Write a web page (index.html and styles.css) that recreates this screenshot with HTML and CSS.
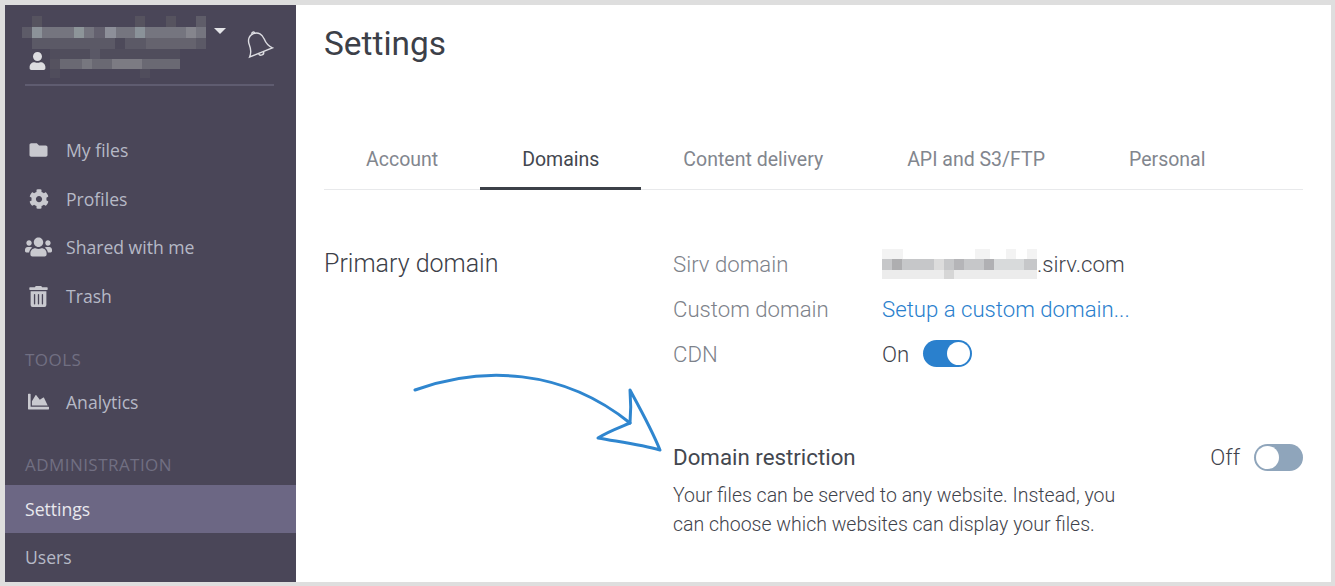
FILE: index.html
```html
<!DOCTYPE html>
<html lang="en">

<head>
    <meta charset="UTF-8">
    <title>Settings</title>
    <link rel="stylesheet" href="styles.css">
</head>

<body>
    <div class="frame">
        <aside class="sidebar">
            <div class="account">
                <div class="account-info">
                    <svg class="blur-name" width="184" height="62" viewBox="0 0 184 62">
                        <g fill="#56535f">
                            <rect x="10" y="0" width="10" height="11" />
                            <rect x="113" y="0" width="10" height="11" />
                            <rect x="144" y="0" width="10" height="11" />
                            <rect x="174" y="0" width="10" height="11" fill="#5f5d69" />
                        </g>
                        <rect x="0" y="11" width="184" height="11" fill="#75757f" />
                        <rect x="0" y="11" width="10" height="11" fill="#5d5b68" />
                        <rect x="10" y="11" width="10" height="11" fill="#8c9299" />
                        <rect x="52" y="11" width="10" height="11" fill="#8d9599" />
                        <rect x="72" y="11" width="11" height="11" fill="#64616f" />
                        <rect x="83" y="11" width="11" height="11" fill="#8d8f99" />
                        <rect x="113" y="11" width="10" height="11" fill="#8a9299" />
                        <rect x="164" y="11" width="10" height="11" fill="#85858d" />
                        <rect x="10" y="22" width="174" height="11" fill="#5b5966" />
                        <rect x="93" y="22" width="10" height="11" fill="#4d4a5a" />
                        <rect x="124" y="22" width="50" height="11" fill="#65636e" />
                        <rect x="28" y="33" width="130" height="10" fill="#504d5c" />
                        <rect x="68" y="33" width="10" height="10" fill="#5a5866" />
                        <rect x="28" y="43" width="130" height="10" fill="#6a6973" />
                        <rect x="28" y="43" width="10" height="10" fill="#55525f" />
                        <rect x="60" y="43" width="10" height="10" fill="#77777f" />
                        <rect x="90" y="43" width="30" height="10" fill="#7c7b83" />
                        <rect x="28" y="53" width="10" height="9" fill="#504d5c" />
                        <rect x="118" y="53" width="10" height="9" fill="#504d5c" />
                    </svg>
                    <svg class="user-icon" width="17" height="18" viewBox="0 0 448 512">
                        <path
                            d="M224 256c70.7 0 128-57.3 128-128S294.7 0 224 0 96 57.3 96 128s57.3 128 128 128zm89.6 32h-16.7c-22.2 10.2-46.9 16-72.9 16s-50.6-5.8-72.9-16h-16.7C60.2 288 0 348.2 0 422.4V464c0 26.5 21.5 48 48 48h352c26.5 0 48-21.5 48-48v-41.6c0-74.2-60.2-134.4-134.4-134.4z" />
                    </svg>
                    <span class="caret"></span>
                </div>
                <svg class="bell" width="32" height="32" viewBox="0 0 30 30">
                    <g transform="rotate(-22 15 15)">
                        <path d="M15 3.5c-5 0-7.5 4-7.5 8.500 0 5.500-1.500 8-4 10.500h23c-2.500-2.500-4-5-4-10.500 0-4.500-2.500-8.500-7.500-8.500z" />
                        <path d="M13.500 3.500a1.500 1.500 0 0 1 3 0" />
                        <path d="M12.500 22.500a2.500 2.500 0 0 0 5 0" />
                    </g>
                </svg>
            </div>

            <nav class="nav">
                <a class="nav-item">
                    <span class="nav-icon"><svg width="21" height="18" viewBox="0 0 512 512">
                            <path
                                d="M464 128H272l-64-64H48C21.490 64 0 85.490 0 112v288c0 26.510 21.490 48 48 48h416c26.510 0 48-21.490 48-48V176c0-26.510-21.490-48-48-48z" />
                        </svg></span>
                    My files
                </a>
                <a class="nav-item">
                    <span class="nav-icon"><svg width="20" height="20" viewBox="0 0 512 512">
                            <path
                                d="M487.400 315.700l-42.600-24.600c4.300-23.200 4.300-47 0-70.200l42.600-24.600c4.900-2.800 7.100-8.600 5.500-14-11.100-35.600-30-67.800-54.700-94.600-3.800-4.100-10-5.100-14.800-2.300L380.800 110c-17.900-15.400-38.500-27.300-60.800-35.100V25.800c0-5.600-3.900-10.500-9.400-11.700-36.700-8.200-74.300-7.800-109.200 0-5.500 1.200-9.400 6.100-9.400 11.700V75c-22.200 7.900-42.800 19.800-60.800 35.100L88.700 85.500c-4.900-2.800-11-1.900-14.800 2.300-24.700 26.700-43.600 58.900-54.700 94.600-1.700 5.400.6 11.200 5.500 14L67.300 221c-4.300 23.200-4.300 47 0 70.200l-42.600 24.600c-4.900 2.800-7.100 8.600-5.500 14 11.100 35.600 30 67.800 54.700 94.600 3.800 4.100 10 5.100 14.800 2.300l42.600-24.600c17.900 15.400 38.500 27.300 60.800 35.100v49.200c0 5.600 3.900 10.500 9.400 11.700 36.700 8.200 74.300 7.800 109.200 0 5.500-1.200 9.400-6.100 9.400-11.700v-49.200c22.200-7.900 42.800-19.800 60.800-35.100l42.600 24.600c4.900 2.800 11 1.900 14.800-2.300 24.700-26.700 43.600-58.900 54.700-94.600 1.500-5.500-.7-11.300-5.600-14.100zM256 336c-44.100 0-80-35.900-80-80s35.900-80 80-80 80 35.900 80 80-35.900 80-80 80z" />
                        </svg></span>
                    Profiles
                </a>
                <a class="nav-item">
                    <span class="nav-icon"><svg width="27" height="22" viewBox="0 0 640 512">
                            <path
                                d="M96 224c35.300 0 64-28.700 64-64s-28.700-64-64-64-64 28.700-64 64 28.700 64 64 64zm448 0c35.300 0 64-28.700 64-64s-28.700-64-64-64-64 28.700-64 64 28.700 64 64 64zm32 32h-64c-17.600 0-33.500 7.100-45.100 18.600 40.300 22.100 68.900 62 75.100 109.400h66c17.700 0 32-14.300 32-32v-32c0-35.300-28.700-64-64-64zm-256 0c61.900 0 112-50.100 112-112S381.900 32 320 32 208 82.100 208 144s50.100 112 112 112zm76.800 32h-8.300c-20.800 10-43.900 16-68.500 16s-47.600-6-68.500-16h-8.300C179.600 288 128 339.600 128 403.200V432c0 26.500 21.500 48 48 48h288c26.500 0 48-21.500 48-48v-28.800c0-63.600-51.600-115.200-115.200-115.200zm-223.700-13.400C161.500 263.100 145.600 256 128 256H64c-35.300 0-64 28.700-64 64v32c0 17.700 14.300 32 32 32h65.900c6.300-47.400 34.900-87.300 75.200-109.400z" />
                        </svg></span>
                    Shared with me
                </a>
                <a class="nav-item">
                    <span class="nav-icon"><svg width="19" height="21" viewBox="0 0 448 512">
                            <path
                                d="M32 464a48 48 0 0 0 48 48h288a48 48 0 0 0 48-48V128H32zm272-256a16 16 0 0 1 32 0v224a16 16 0 0 1-32 0zm-96 0a16 16 0 0 1 32 0v224a16 16 0 0 1-32 0zm-96 0a16 16 0 0 1 32 0v224a16 16 0 0 1-32 0zM432 32H312l-9.400-18.700A24 24 0 0 0 281.100 0H166.800a23.720 23.720 0 0 0-21.400 13.300L136 32H16A16 16 0 0 0 0 48v32a16 16 0 0 0 16 16h416a16 16 0 0 0 16-16V48a16 16 0 0 0-16-16z" />
                        </svg></span>
                    Trash
                </a>

                <div class="nav-label nav-label-tools">TOOLS</div>
                <a class="nav-item">
                    <span class="nav-icon"><svg width="21" height="21" viewBox="0 0 512 512">
                            <path
                                d="M500 384c6.600 0 12 5.400 12 12v40c0 6.600-5.400 12-12 12H12c-6.600 0-12-5.400-12-12V76c0-6.600 5.400-12 12-12h40c6.600 0 12 5.400 12 12v308h436zM372.700 159.500L288 216l-85.300-113.700c-5.100-6.800-15.500-6.300-19.900 1L96 248v104h384l-89.900-187.800c-3.200-6.500-11.400-8.700-17.400-4.700z" />
                        </svg></span>
                    Analytics
                </a>

                <div class="nav-label nav-label-admin">ADMINISTRATION</div>
                <a class="nav-item nav-plain active">Settings</a>
                <a class="nav-item nav-plain">Users</a>
            </nav>
        </aside>

        <main class="main">
            <h1>Settings</h1>

            <div class="tabs">
                <a class="tab">Account</a>
                <a class="tab current">Domains</a>
                <a class="tab">Content delivery</a>
                <a class="tab">API and S3/FTP</a>
                <a class="tab">Personal</a>
            </div>

            <section class="domain-section">
                <h2>Primary domain</h2>
                <div class="domain-rows">
                    <div class="row">
                        <span class="row-label">Sirv domain</span>
                        <span class="row-value">
                            <svg class="blur-domain" width="155" height="30" viewBox="0 0 155 30">
                                <g fill="#f3f3f3">
                                    <rect x="0" y="0" width="21" height="10" />
                                    <rect x="93" y="0" width="15" height="10" />
                                    <rect x="124" y="0" width="10" height="10" />
                                    <rect x="145" y="0" width="10" height="10" />
                                </g>
                                <rect x="0" y="10" width="155" height="11" fill="#c6c7c9" />
                                <rect x="0" y="21" width="155" height="9" fill="#ececec" />
                                <rect x="10" y="10" width="10" height="11" fill="#aeaeb0" />
                                <rect x="52" y="10" width="10" height="11" fill="#dcdcdc" />
                                <rect x="72" y="10" width="10" height="11" fill="#b5b5b8" />
                                <rect x="102" y="10" width="10" height="11" fill="#b0b0b3" />
                                <rect x="112" y="10" width="30" height="11" fill="#d8dadb" />
                                <rect x="62" y="21" width="10" height="9" fill="#d6d6d6" />
                            </svg>.sirv.com
                        </span>
                    </div>
                    <div class="row">
                        <span class="row-label">Custom domain</span>
                        <a class="row-link">Setup a custom domain...</a>
                    </div>
                    <div class="row">
                        <span class="row-label">CDN</span>
                        <span class="row-value toggle-wrap">On <span class="toggle on"></span></span>
                    </div>
                </div>
            </section>

            <section class="restriction">
                <div class="restriction-head">
                    <h3>Domain restriction</h3>
                    <span class="row-value toggle-wrap">Off <span class="toggle off"></span></span>
                </div>
                <p>Your files can be served to any website. Instead, you<br>can choose which websites can display your files.</p>
            </section>

            <svg class="arrow" width="260" height="100" viewBox="0 0 260 100">
                <path d="M3 16C70 -8 150 -6 218 49" />
                <path d="M218 49C219 38 219 28 218 16C230 38 240 56 248 76C230 71 208 68 186 64C195 58 206 54 218 49z" />
            </svg>
        </main>
    </div>
</body>

</html>
```

FILE: styles.css
```css
* {
    box-sizing: border-box;
}

body {
    margin: 0;
    background: #fff;
    overflow: hidden;
}

.frame {
    display: flex;
    height: 586px;
    border: 5px solid #dedede;
    border-right-width: 4px;
    border-bottom-width: 4px;
    background: #fff;
}

/* sidebar */
.sidebar {
    width: 291px;
    flex-shrink: 0;
    background: #4a4658;
    font-family: 'Open Sans', sans-serif;
    overflow: hidden;
}

.account {
    position: relative;
    height: 81px;
    margin: 0 22px 0 20px;
    border-bottom: 2px solid #5f5c70;
}

.account-info {
    height: 79px;
}

.blur-name {
    position: absolute;
    left: -3px;
    top: 11px;
}

.user-icon {
    position: absolute;
    left: 4px;
    top: 47px;
    fill: #dcdce0;
}

.caret {
    position: absolute;
    left: 189px;
    top: 23px;
    border-left: 6px solid transparent;
    border-right: 6px solid transparent;
    border-top: 6px solid #e4e4e8;
}

.bell {
    position: absolute;
    left: 217px;
    top: 24px;
    fill: none;
    stroke: #dddde2;
    stroke-width: 1.3;
}

.nav {
    margin-top: 39.8px;
}

.nav-item {
    display: flex;
    align-items: center;
    height: 48.67px;
    padding-left: 20px;
    color: #b6b9c6;
    font-size: 17.6px;
}

.nav-icon {
    display: flex;
    justify-content: center;
    align-items: center;
    width: 27px;
    margin-right: 14px;
}

.nav-icon svg {
    fill: #c9c9cf;
}

.nav-plain {
    height: 48px;
}

.nav-item.active {
    background: #6c6784;
    color: #e9e9ee;
}

.nav-label {
    height: 30px;
    line-height: 30px;
    padding-left: 20px;
    color: #716f82;
    font-size: 17px;
    letter-spacing: 0.45px;
}

.nav-label-tools {
    margin: 24.2px 0 3px;
}

.nav-label-admin {
    margin: 24px 0 5px;
}

/* main */
.main {
    position: relative;
    flex: 1;
    padding: 0 28px;
    font-family: Roboto, sans-serif;
    color: #4a4f57;
}

h1 {
    margin: 0;
    padding-top: 18px;
    height: 119px;
    font-size: 33.4px;
    line-height: 42px;
    font-weight: 400;
    color: #3c4048;
}

.tabs {
    display: flex;
    height: 66px;
    border-bottom: 1px solid #e8e9eb;
}

.tab {
    padding: 0 42px;
    height: 66px;
    line-height: 72px;
    font-size: 19.5px;
    color: #82868e;
}

.tab.current {
    color: #43474f;
    border-bottom: 3px solid #3c4048;
}

.domain-section {
    display: flex;
    margin-top: 51px;
}

h2 {
    margin: 0;
    width: 349px;
    font-size: 25px;
    font-weight: 300;
    line-height: 46px;
    color: #3c4048;
}

.domain-rows {
    flex: 1;
}

.row {
    display: flex;
    align-items: center;
    height: 45px;
    font-size: 22.2px;
    font-weight: 300;
}

.row-label {
    width: 209px;
    color: #7d828a;
}

.row-value {
    display: flex;
    align-items: center;
    color: #3f434b;
    font-size: 22.2px;
    font-weight: 300;
}

.row-link {
    color: #2a80cd;
}

.toggle-wrap {
    gap: 14px;
}

.toggle {
    position: relative;
    display: block;
    width: 49px;
    height: 27px;
    border-radius: 14px;
}

.toggle::after {
    content: "";
    position: absolute;
    top: 2px;
    width: 23px;
    height: 23px;
    border-radius: 50%;
    background: #fff;
}

.toggle.on {
    background: #2a80cd;
}

.toggle.on::after {
    right: 2px;
}

.toggle.off {
    background: #8fa5bb;
}

.toggle.off::after {
    left: 2px;
}

.restriction {
    margin: 66px 0 0 349px;
}

.restriction-head {
    display: flex;
    justify-content: space-between;
    align-items: center;
    height: 30px;
}

h3 {
    margin: 0;
    font-size: 22.3px;
    font-weight: 400;
    color: #43474f;
}

.restriction p {
    margin: 9px 0 0;
    font-size: 19.5px;
    font-weight: 300;
    line-height: 29px;
    color: #3f434b;
}

.arrow {
    position: absolute;
    left: 116px;
    top: 369px;
    overflow: visible;
    fill: none;
    stroke: #2f86cf;
    stroke-width: 3;
    stroke-linejoin: round;
    stroke-linecap: round;
}
```
